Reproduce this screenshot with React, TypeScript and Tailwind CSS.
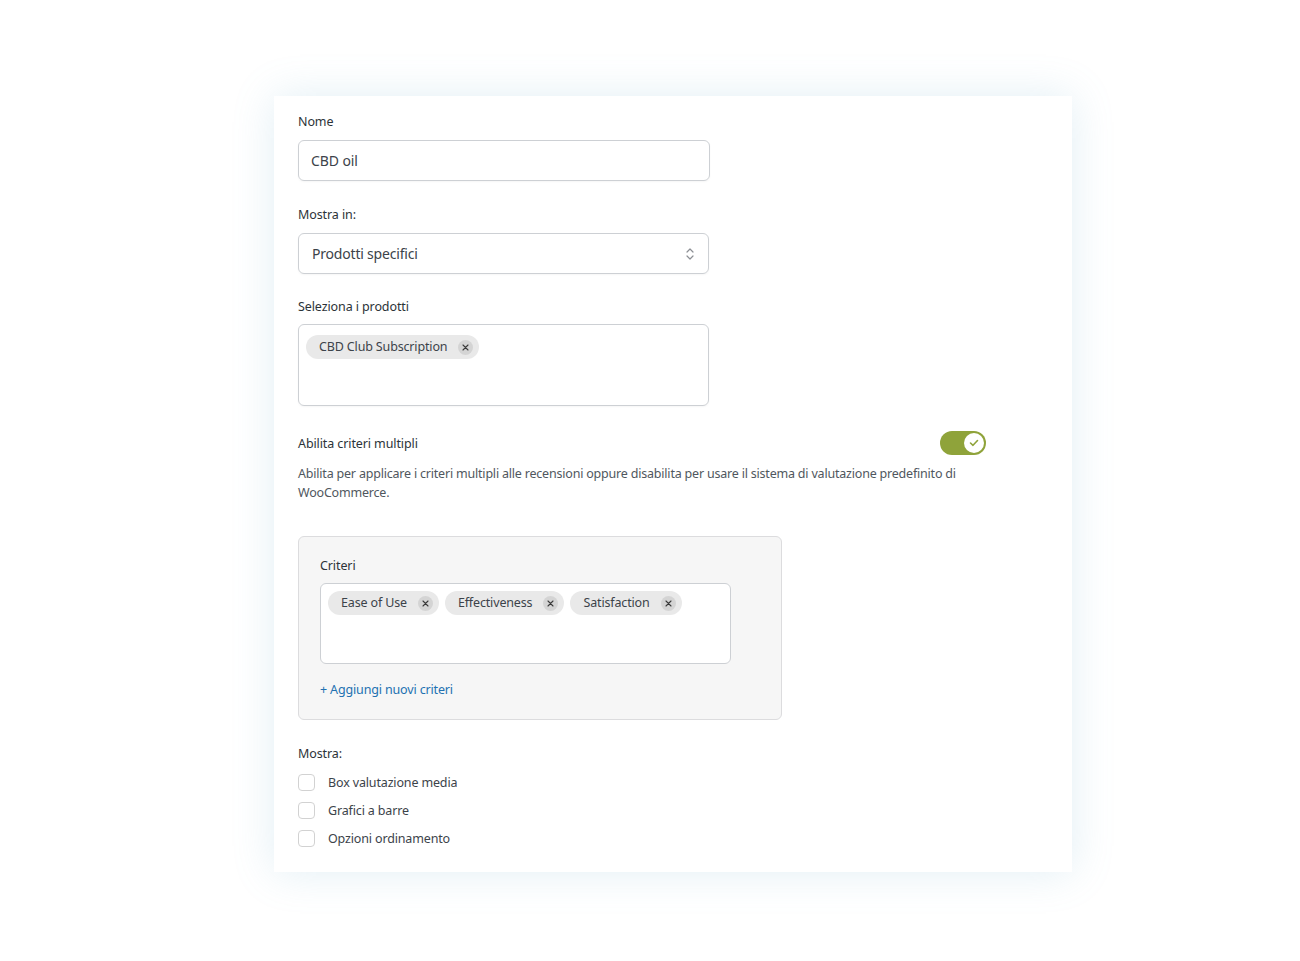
import React from "react";

const font = { fontFamily: '"Noto Sans", "Open Sans", sans-serif' };

function Chip({ label }: { label: string }) {
  return (
    <span className="inline-flex items-center h-6 rounded-full bg-[#e9e9e9] pl-[13px] pr-[6px] text-[12.5px] tracking-[-0.15px] text-[#3c434a] gap-[11px]">
      <span className="leading-none">{label}</span>
      <span className="w-[15px] h-[15px] rounded-full bg-[#d4d4d4] flex items-center justify-center">
        <svg width="7" height="7" viewBox="0 0 7 7">
          <path d="M1 1L6 6M6 1L1 6" stroke="#3a3a3a" strokeWidth="1.1" strokeLinecap="round" />
        </svg>
      </span>
    </span>
  );
}

function Checkbox({ label }: { label: string }) {
  return (
    <label className="flex items-center gap-[13px] h-[17px]">
      <span className="w-[17px] h-[17px] rounded-[4px] border border-[#d2d2d2] bg-white shrink-0" />
      <span className="text-[12.5px] tracking-[-0.15px] leading-[17px] text-[#3c434a]">{label}</span>
    </label>
  );
}

function Label({ children }: { children: React.ReactNode }) {
  return <div className="text-[12.5px] tracking-[-0.1px] leading-[18px] pt-px text-[#2c3338]">{children}</div>;
}

export default function App() {
  return (
    <div className="min-h-[961px] bg-white pt-[96px] pb-[89px]" style={font}>
      <div className="ml-[274px] w-[798px] bg-white shadow-[0_0_40px_rgba(110,175,205,0.2)] pl-6 pr-6 pt-[16px] pb-[25px]">
        <Label>Nome</Label>
        <div className="mt-[9px] w-[412px] h-[41px] rounded-[6px] border border-[#cdd0d4] flex items-center pl-3 text-[14px] tracking-[-0.1px] text-[#3c434a] shadow-[0_1px_2px_rgba(0,0,0,0.04)]">
          CBD oil
        </div>

        <div className="mt-[24px]">
          <Label>Mostra in:</Label>
        </div>
        <div className="mt-[9px] w-[411px] h-[41px] rounded-[6px] border border-[#cdd0d4] flex items-center justify-between pl-[13px] pr-[13px] text-[14px] tracking-[-0.2px] text-[#3c434a] shadow-[0_1px_2px_rgba(0,0,0,0.04)]">
          <span>Prodotti specifici</span>
          <svg width="10" height="16" viewBox="0 0 10 16" fill="none">
            <path d="M2 6L5 3L8 6" stroke="#8c8f94" strokeWidth="1.2" strokeLinecap="round" strokeLinejoin="round" />
            <path d="M2 10L5 13L8 10" stroke="#8c8f94" strokeWidth="1.2" strokeLinecap="round" strokeLinejoin="round" />
          </svg>
        </div>

        <div className="mt-[23px]">
          <Label>Seleziona i prodotti</Label>
        </div>
        <div className="mt-[8px] w-[411px] h-[82px] rounded-[6px] border border-[#cdd0d4] pl-[7px] pt-[8px] shadow-[0_1px_2px_rgba(0,0,0,0.04)]">
          <Chip label="CBD Club Subscription" />
        </div>

        <div className="mt-[25px] w-[688px] h-6 flex items-center justify-between">
          <Label>Abilita criteri multipli</Label>
          <div className="w-[46px] h-6 rounded-full bg-[#8fa33a] flex items-center justify-end pr-[2px]">
            <div className="w-5 h-5 rounded-full bg-white flex items-center justify-center">
              <svg width="10" height="8" viewBox="0 0 10 8" fill="none">
                <path d="M1.5 4L4 6.3L8.5 1.5" stroke="#8fa33a" strokeWidth="1.6" strokeLinecap="round" strokeLinejoin="round" />
              </svg>
            </div>
          </div>
        </div>
        <p className="mt-[9px] w-[688px] text-[12.5px] tracking-[-0.2px] leading-[19px] text-[#50575e]">
          Abilita per applicare i criteri multipli alle recensioni oppure disabilita per usare il sistema di valutazione predefinito di WooCommerce.
        </p>

        <div className="mt-[34px] w-[484px] rounded-[6px] border border-[#dcdcde] bg-[#f6f6f6] pl-[21px] pt-[19px] pb-[20px]">
          <Label>Criteri</Label>
          <div className="mt-[8px] w-[411px] h-[81px] rounded-[6px] border border-[#cdd0d4] bg-white pl-[7px] pt-[7px] flex items-start gap-[6px]">
            <Chip label="Ease of Use" />
            <Chip label="Effectiveness" />
            <Chip label="Satisfaction" />
          </div>
          <div className="mt-[17px] text-[12.5px] tracking-[-0.15px] leading-[18px] text-[#2271b1]">+ Aggiungi nuovi criteri</div>
        </div>

        <div className="mt-[24px]">
          <Label>Mostra:</Label>
        </div>
        <div className="mt-[11px] flex flex-col gap-[11px]">
          <Checkbox label="Box valutazione media" />
          <Checkbox label="Grafici a barre" />
          <Checkbox label="Opzioni ordinamento" />
        </div>
      </div>
    </div>
  );
}
